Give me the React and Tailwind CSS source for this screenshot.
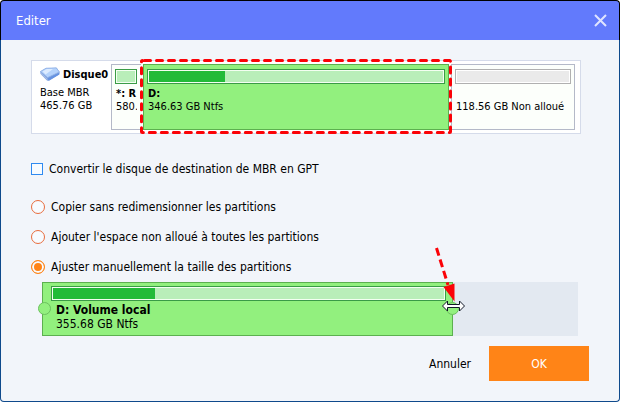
import React, { useState } from 'react';

const RESIZE_OPTIONS = [
  { id: 'copy', label: 'Copier sans redimensionner les partitions' },
  { id: 'spread', label: "Ajouter l'espace non alloué à toutes les partitions" },
  { id: 'manual', label: 'Ajuster manuellement la taille des partitions' },
];

const DriveIcon = () => (
  <svg width="20" height="15" viewBox="0 0 20 15" aria-hidden="true">
    <path d="M0.3 4.6 L6 1.2 L16.5 0.8 L19.6 5 L19.4 7.6 L9 13.8 L7 13.6 L0.6 7 Z" fill="#6f97de" />
    <path d="M0.5 4.5 L6 1.2 L16.3 0.9 L19.3 5 L7.6 10.6 Z" fill="#b4d2fb" stroke="#93b2e6" strokeWidth="0.8" />
    <path d="M2.5 4.6 L6.8 2.1 L13 2 L5.6 7.4 Z" fill="#dcebff" />
    <path d="M0.8 5.6 L7.4 11.4 L7.6 13.4 L1 7.2 Z" fill="#a9bfe6" />
    <path d="M8 11.4 L19.2 6 L19 7.6 L8.8 13.4 Z" fill="#6593e2" />
  </svg>
);

// Used space bar drawn on top of each partition
const UsageBar = ({ used = 0, empty = false }) => (
  <div
    className={`h-[15px] border p-px ${
      empty ? 'border-[#b0b0b0] bg-white' : 'border-[#3a9b46] bg-[#f4fff2]'
    }`}
  >
    <div className={`h-full ${empty ? 'bg-[#eaeaea]' : 'bg-[#b9eeb9]'}`}>
      <div className="h-full bg-[#22bb38]" style={{ width: `${used}%` }} />
    </div>
  </div>
);

const DiskMap = () => (
  <section className="flex border border-[#d5dbea] bg-white py-[3px] pr-[5px] text-[11px] leading-[13px]">
    <div className="w-[79px] shrink-0 pt-[3px] pl-2">
      <div className="flex items-center gap-[3px]">
        <DriveIcon />
        <h2 className="font-bold">Disque0</h2>
      </div>
      <p className="pt-1">Base MBR</p>
      <p>465.76 GB</p>
    </div>

    <div className="grid h-[66px] flex-1 grid-cols-[30px_306fr_124fr] gap-0.5">
      <div className="overflow-hidden border border-r-0 border-[#b4b9c8] bg-[#fcfffb] py-1 pr-1 pl-[3px] whitespace-nowrap">
        <UsageBar />
        <div className="overflow-hidden pt-[3px] pl-px">
          <p className="font-bold">*: R</p>
          <p>580.</p>
        </div>
      </div>

      <div className="relative border border-[#5cb04f] bg-[#92f07e] px-[3px] py-1">
        <UsageBar used={26} />
        <div className="pt-[3px] pl-px">
          <p className="font-bold">D:</p>
          <p>346.63 GB Ntfs</p>
        </div>
        <svg className="absolute -top-[7px] -left-[4px] h-[78px] w-[calc(100%+8px)]" aria-hidden="true">
          <rect
            x="1.5"
            y="2.5"
            width="calc(100% - 3px)"
            height="72"
            rx="1"
            fill="none"
            stroke="#fb0207"
            strokeWidth="3"
            strokeDasharray="6 6"
            strokeDashoffset="-2"
            strokeLinecap="round"
          />
        </svg>
      </div>

      <div className="border border-[#b4b9c8] bg-[#fcfffb] px-[3px] py-1">
        <UsageBar empty />
        <p className="pt-4 pl-px whitespace-nowrap">118.56 GB Non alloué</p>
      </div>
    </div>
  </section>
);

const ResizeSlider = () => (
  <div className="grid grid-cols-[411fr_125fr] bg-[#e3e9f1] text-xs">
    <div className="relative h-[54px] border border-[#5cb04f] bg-[#92f07e] pt-[3px] pr-1.5 pl-2">
      <UsageBar used={26} />
      <div className="pt-0.5 pl-[5px] leading-[14px]">
        <p className="font-bold">D: Volume local</p>
        <p>355.68 GB Ntfs</p>
      </div>
      <button
        type="button"
        aria-label="Début de la partition"
        className="absolute top-[19px] -left-[5px] size-[13px] rounded-full border border-[#6cc05e] bg-[#92f07e]"
      />
      <button
        type="button"
        aria-label="Fin de la partition"
        className="absolute top-[19px] -right-[7px] size-[13px] cursor-ew-resize rounded-full border border-[#6cc05e] bg-[#92f07e]"
      />
      {/* Hint arrow and resize cursor over the right handle */}
      <svg className="absolute -top-[37px] -right-[16px]" width="36" height="70" viewBox="0 0 36 70" aria-hidden="true">
        <path d="M4.5 2 L16 39" stroke="#fb0207" strokeWidth="3" strokeDasharray="8 4" />
        <path d="M11.5 41 L22.5 37.5 L22.5 55.5 Z" fill="#fb0207" />
        <path
          d="M10.5 60 L15.5 55 V58.5 H27.5 V55 L32.5 60 L27.5 65 V61.5 H15.5 V65 Z"
          fill="#fff"
          stroke="#111827"
          strokeWidth="1"
        />
      </svg>
    </div>
  </div>
);

const App = () => {
  const [convertToGpt, setConvertToGpt] = useState(false);
  const [mode, setMode] = useState('manual');

  return (
    <div className="flex min-h-screen flex-col bg-white font-['DejaVu_Sans_Condensed','DejaVu_Sans',sans-serif] text-black">
      <header className="flex h-10 items-center justify-between rounded-t-[4px] border border-b-0 border-black bg-[#627afc] pr-3 pl-[15px]">
        <h1 className="text-[13px] text-white">Editer</h1>
        <button type="button" aria-label="Fermer" className="text-[#dfe4ff]">
          <svg width="13" height="13" viewBox="0 0 13 13" aria-hidden="true">
            <path d="M1 1 L12 12 M12 1 L1 12" stroke="currentColor" strokeWidth="2" />
          </svg>
        </button>
      </header>

      <main className="flex flex-1 flex-col rounded-b-[4px] border border-t-0 border-[#0f4a8c] bg-[#f2f5fa]">
        <div className="flex flex-1 flex-col pt-5 pr-[38px] pl-[30px]">
          <DiskMap />

          <label className="mt-[27px] flex h-4 items-center gap-[6px] text-xs">
            <input
              type="checkbox"
              checked={convertToGpt}
              onChange={(e) => setConvertToGpt(e.target.checked)}
              className="size-3 appearance-none border border-[#2f8af0] bg-[#f7fbff] checked:bg-[#2f8af0]"
            />
            Convertir le disque de destination de MBR en GPT
          </label>

          <fieldset className="mt-[22px] flex flex-col gap-[14px] text-xs">
            {RESIZE_OPTIONS.map((option) => (
              <label key={option.id} className="flex h-4 items-center gap-[6px]">
                <input
                  type="radio"
                  name="resize"
                  checked={mode === option.id}
                  onChange={() => setMode(option.id)}
                  className="size-[14px] appearance-none rounded-full border border-[#e86c3c] bg-[#f7fbff] checked:border-[#ff8417] checked:bg-[#ff8417] checked:shadow-[inset_0_0_0_2px_#f7fbff]"
                />
                {option.label}
              </label>
            ))}
          </fieldset>

          <div className="mt-[7px] mr-[3px] ml-[11px]">
            <ResizeSlider />
          </div>
        </div>

        <footer className="flex items-center justify-end gap-[18px] pr-[30px] pb-5 text-xs">
          <button type="button">Annuler</button>
          <button type="button" className="h-[35px] w-[100px] bg-[#ff8417] text-white">
            OK
          </button>
        </footer>
      </main>
    </div>
  );
};

export default App;
